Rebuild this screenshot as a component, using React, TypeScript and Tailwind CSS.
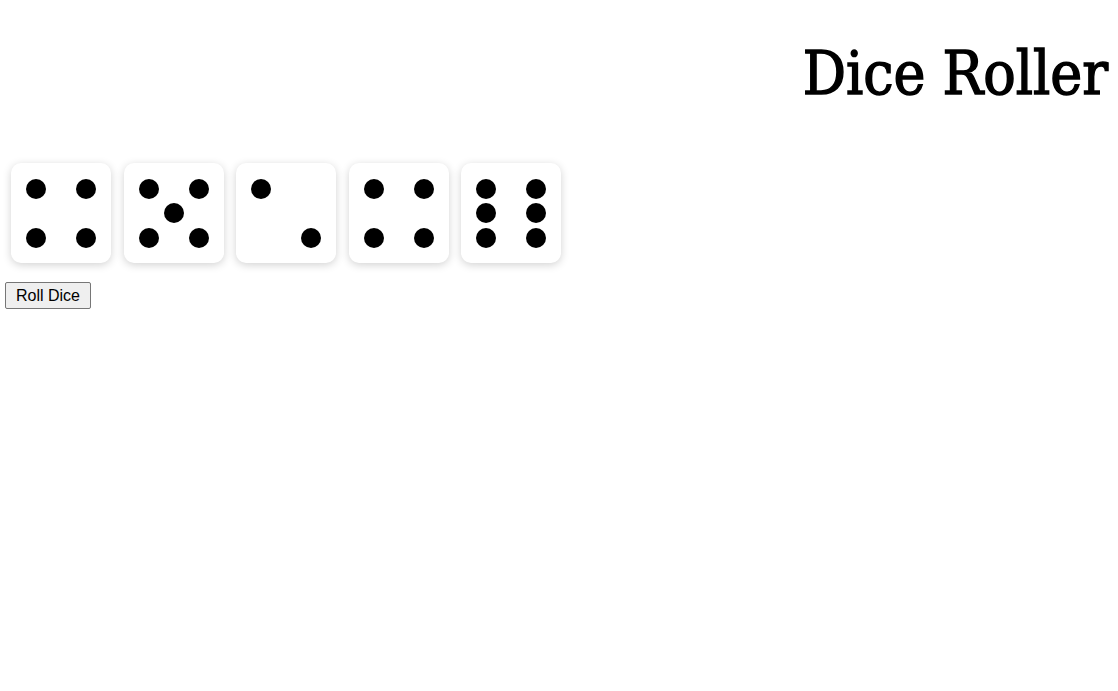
import React, { useState } from 'react';

// pip positions on a 3x3 grid (row, col), 0..2
const PIPS: Record<number, [number, number][]> = {
    1: [[1, 1]],
    2: [[0, 0], [2, 2]],
    3: [[0, 0], [1, 1], [2, 2]],
    4: [[0, 0], [0, 2], [2, 0], [2, 2]],
    5: [[0, 0], [0, 2], [1, 1], [2, 0], [2, 2]],
    6: [[0, 0], [0, 2], [1, 0], [1, 2], [2, 0], [2, 2]],
};

const Die: React.FC<{ value: number }> = ({ value }) => (
    <div className="relative w-[100px] h-[100px] bg-white rounded-[10px] shadow-[0_2px_8px_rgba(0,0,0,0.18)] flex-shrink-0">
        {PIPS[value].map(([r, c], i) => (
            <span
                key={i}
                className="absolute w-[20px] h-[20px] rounded-full bg-black"
                style={{ left: 15 + c * 25, top: 15.5 + r * 24.5 }}
            />
        ))}
    </div>
);

const App: React.FC = () => {
    const [dice, setDice] = useState<number[]>([4, 5, 2, 4, 6]);

    const roll = () => {
        setDice(dice.map(() => Math.floor(Math.random() * 6) + 1));
    };

    return (
        <div className="min-h-[691px] bg-white text-black">
            <h1 className="text-right pr-[10px] pt-[30px] h-[163px] text-[60px] leading-[86px] font-normal font-['DejaVu_Serif_Condensed','DejaVu_Serif',serif] [font-stretch:condensed] [-webkit-text-stroke:1.4px_black]">
                Dice Roller
            </h1>

            {/* Dice row */}
            <div className="flex gap-[12.5px] pl-[11px]">
                {dice.map((v, i) => (
                    <Die key={i} value={v} />
                ))}
            </div>

            <button
                onClick={roll}
                className="mt-[19px] ml-[5px] h-[27px] px-[10px] bg-[#efefef] border border-[#767676] rounded-[2px] text-[16px] text-black font-['Liberation_Sans',Arial,sans-serif] hover:bg-[#e5e5e5]"
            >
                Roll Dice
            </button>
        </div>
    );
};

export default App;
